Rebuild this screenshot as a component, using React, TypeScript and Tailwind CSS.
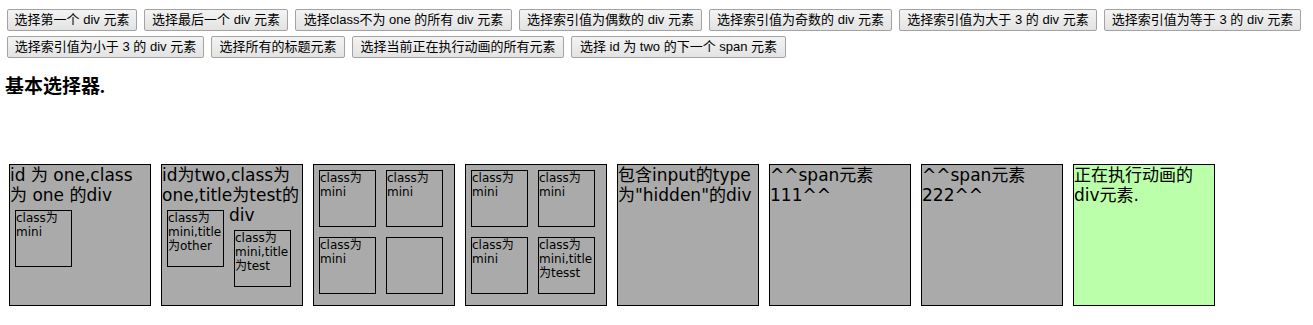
const buttonRows = [
  [
    { label: '选择第一个 div 元素', w: 'w-[130px]' },
    { label: '选择最后一个 div 元素', w: 'w-[144px]' },
    { label: '选择class不为 one 的所有 div 元素', w: 'w-[217px]' },
    { label: '选择索引值为偶数的 div 元素', w: 'w-[183px]' },
    { label: '选择索引值为奇数的 div 元素', w: 'w-[183px]' },
    { label: '选择索引值为大于 3 的 div 元素', w: 'w-[198px]' },
    { label: '选择索引值为等于 3 的 div 元素', w: 'w-[197px]' },
  ],
  [
    { label: '选择索引值为小于 3 的 div 元素', w: 'w-[197px]' },
    { label: '选择所有的标题元素', w: 'w-[134px]' },
    { label: '选择当前正在执行动画的所有元素', w: 'w-[212px]' },
    { label: '选择 id 为 two 的下一个 span 元素', w: 'w-[215px]' },
  ],
]

function Mini({ children }: { children?: React.ReactNode }) {
  return (
    <div className="m-[5px] h-[57px] w-[57px] shrink-0 border border-black bg-[#aaaaaa] text-[12px] leading-[14px]">
      {children}
    </div>
  )
}

function Box({ children, green }: { children?: React.ReactNode; green?: boolean }) {
  return (
    <div
      className={
        'h-[142px] w-[142px] shrink-0 overflow-hidden border border-black text-[17px] leading-[20px] text-black ' +
        (green ? 'bg-[#bbffaa]' : 'bg-[#aaaaaa]')
      }
    >
      {children}
    </div>
  )
}

export default function App() {
  return (
    <div className="min-h-[325px] w-[1313px] bg-white text-black">
      <div className="flex flex-col gap-[5px] pl-[7px] pt-[9px]">
        {buttonRows.map((row, i) => (
          <div key={i} className="flex gap-[7px]">
            {row.map((b) => (
              <button
                key={b.label}
                className={
                  'h-[22px] whitespace-nowrap rounded-[2px] border border-[#a3a3a3] bg-linear-to-b from-[#f3f3f3] to-[#e3e3e3] text-center font-["Liberation_Sans","Noto_Sans_CJK_SC",sans-serif] text-[13px] leading-[20px] text-black ' +
                  b.w
                }
              >
                {b.label}
              </button>
            ))}
          </div>
        ))}
      </div>

      <h3 className="ml-[5px] mt-[19px] font-['Liberation_Serif','Noto_Sans_CJK_SC',serif] text-[19px] font-bold leading-[20px]">
        基本选择器.
      </h3>

      <div className="mt-[67px] flex gap-[10px] pl-[9px] font-['DejaVu_Sans','Noto_Sans_CJK_SC',sans-serif] whitespace-nowrap">
        <Box>
          id 为 one,class
          <br />
          为 one 的div
          <Mini>
            class为
            <br />
            mini
          </Mini>
        </Box>
        <Box>
          id为two,class为
          <br />
          one,title为test的
          <div className="flex">
            <Mini>
              class为
              <br />
              mini,title
              <br />
              为other
            </Mini>
            <div className="flex flex-col">
              <span>div</span>
              <Mini>
                class为
                <br />
                mini,title
                <br />
                为test
              </Mini>
            </div>
          </div>
        </Box>
        <Box>
          <div className="grid grid-cols-[67px_67px]">
            <Mini>
              class为
              <br />
              mini
            </Mini>
            <Mini>
              class为
              <br />
              mini
            </Mini>
            <Mini>
              class为
              <br />
              mini
            </Mini>
            <Mini />
          </div>
        </Box>
        <Box>
          <div className="grid grid-cols-[67px_67px]">
            <Mini>
              class为
              <br />
              mini
            </Mini>
            <Mini>
              class为
              <br />
              mini
            </Mini>
            <Mini>
              class为
              <br />
              mini
            </Mini>
            <Mini>
              class为
              <br />
              mini,title
              <br />
              为tesst
            </Mini>
          </div>
        </Box>
        <Box>
          包含input的type
          <br />
          为"hidden"的div
        </Box>
        <Box>
          ^^span元素
          <br />
          111^^
        </Box>
        <Box>
          ^^span元素
          <br />
          222^^
        </Box>
        <Box green>
          正在执行动画的
          <br />
          div元素.
        </Box>
      </div>
    </div>
  )
}
